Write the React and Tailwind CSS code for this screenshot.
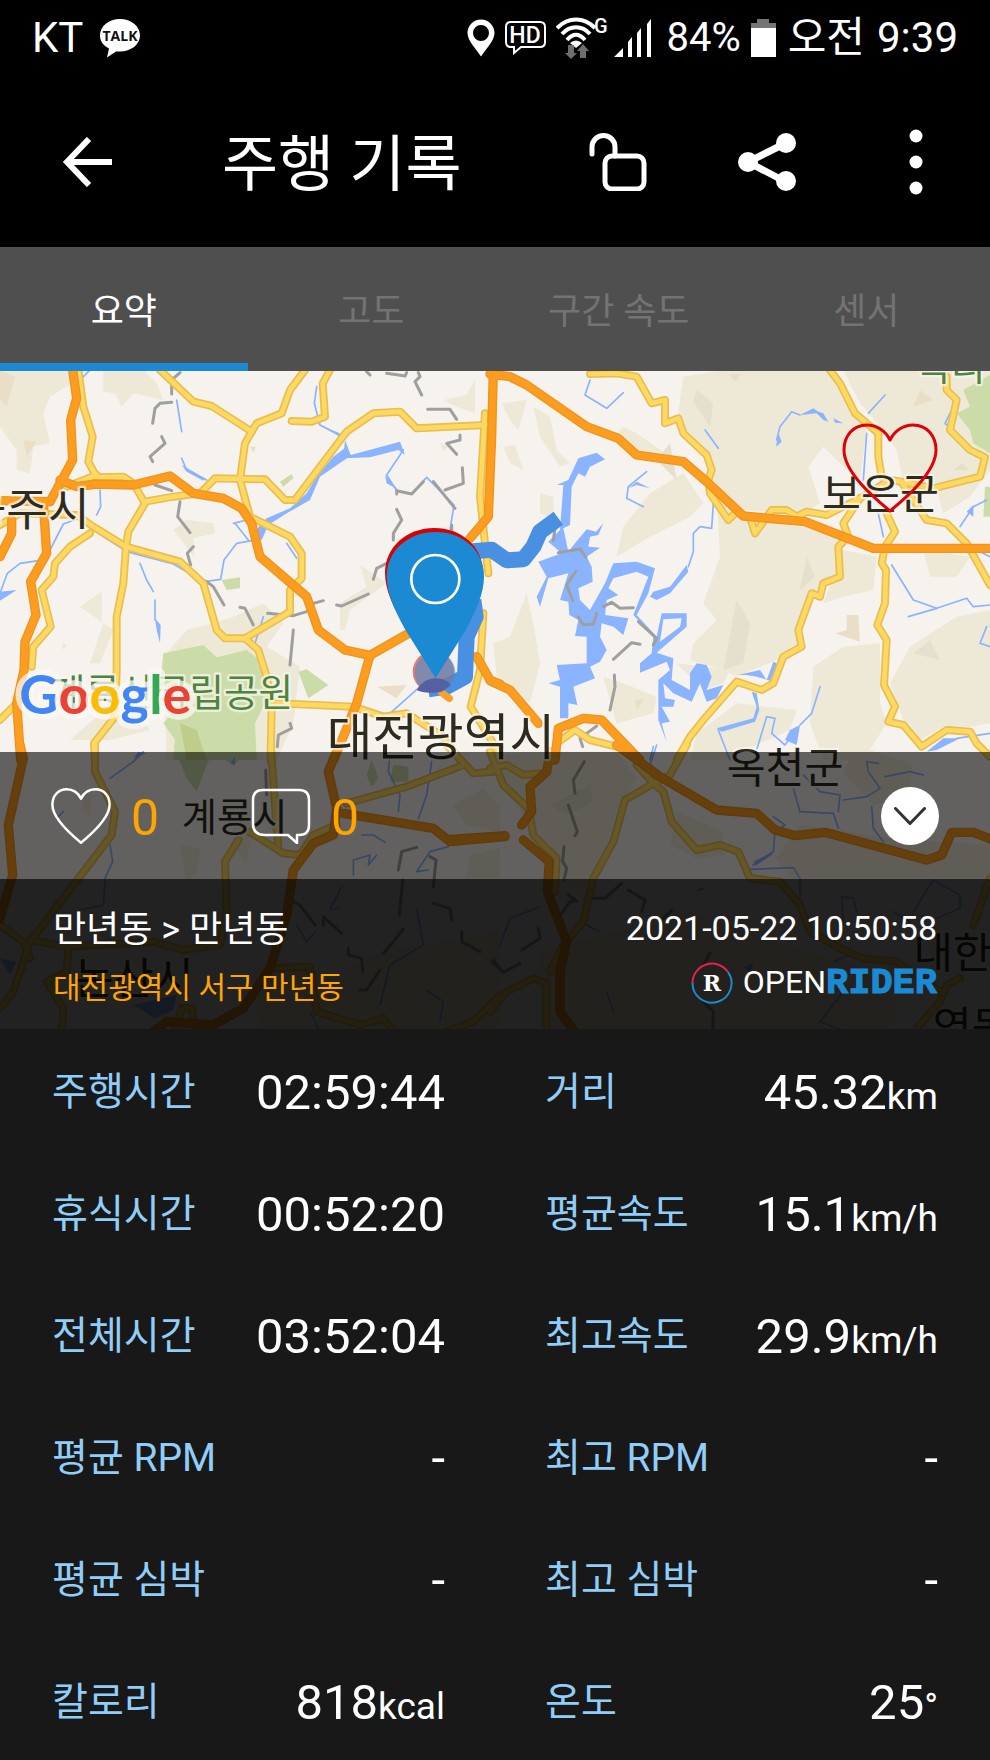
import { useState } from "react";

const TABS = [
  { key: "summary", label: "요약" },
  { key: "altitude", label: "고도" },
  { key: "section", label: "구간 속도" },
  { key: "sensor", label: "센서" },
];

const STATS = [
  { label: "주행시간", value: "02:59:44" },
  { label: "거리", value: "45.32", unit: "km" },
  { label: "휴식시간", value: "00:52:20" },
  { label: "평균속도", value: "15.1", unit: "km/h" },
  { label: "전체시간", value: "03:52:04" },
  { label: "최고속도", value: "29.9", unit: "km/h" },
  { label: "평균 RPM", value: "-" },
  { label: "최고 RPM", value: "-" },
  { label: "평균 심박", value: "-" },
  { label: "최고 심박", value: "-" },
  { label: "칼로리", value: "818", unit: "kcal" },
  { label: "온도", value: "25", unit: "°" },
];

// Map geometry, one entry per tile. Every shape is a list of points local to its tile.
const TILES = [
  {
    key: "nw",
    shift: "translate(0 0)",
    hills: [
      "0,0 205,0 215,40 150,80 130,130 150,220 100,230 90,310 50,300 50,240 0,170",
      "310,0 430,0 470,40 490,90 400,70 365,110 345,70 310,65",
      "520,480 560,450 640,460 645,490 580,505 583,560 550,520",
      "240,710 305,665 305,755",
      "490,860 560,780 640,760 700,740 790,700 850,760 800,830 900,890 880,1060 830,1170 500,1170",
      "1080,585 1160,640 1050,720 1035,780 1020,780 1020,700 1100,650",
      "310,760 340,780 300,880 270,880",
      "1330,90 1400,75 1425,30 1425,130 1370,110",
      "1320,220 1350,225 1330,245",
      "210,1110 290,1040 420,1040 450,1080 330,1110",
      "185,820 200,825 190,840",
    ],
    tan: [
      "0,0 45,20 20,110 0,90",
      "70,210 108,215 80,260",
      "1130,950 1220,945 1190,985",
      "750,230 768,230 760,250",
    ],
    green: [
      "490,850 610,825 650,862 740,840 790,880 800,990 765,1060 770,1170 520,1170 525,1110 490,1060 540,1000 480,950",
      "665,630 720,622 720,655 680,660",
      "895,905 920,898 985,945 925,985",
      "840,335 875,312 880,325 850,350",
    ],
    lakes: [
      "1045,262 960,320 930,390 860,430 805,465 785,510 750,500 800,445 870,415 920,370 950,320 1000,260 1040,230",
      "1035,210 1052,255 1200,215 1215,255 1195,240 1110,262 1030,265",
      "1155,315 1195,360 1160,340",
      "465,745 482,765 480,820 470,780",
      "0,665 50,660 0,692",
      "545,285 615,325 610,332 560,305",
      "950,160 1030,195 1030,205",
    ],
    streams: [
      "950,50 943,100 960,165 1035,205",
      "1210,240 1160,315 1190,362",
      "1235,370 1280,322 1362,405 1350,480",
      "755,512 710,520 672,570 662,628 620,634 560,605 520,582 380,545 280,480",
      "0,670 22,610 60,580 115,572",
      "150,540 190,462 250,440",
      "530,90 545,185",
      "465,690 465,750",
      "300,360 302,410 290,435",
      "705,460 745,510",
      "740,450 700,460",
      "420,580 440,630 460,665",
      "1170,1030 1260,950",
      "270,0 240,30",
      "545,265 560,300 620,330",
      "765,820 790,740",
      "860,520 890,565",
    ],
    borders: [
      "540,8 515,30 515,72",
      "515,97 480,100 465,115 458,160",
      "485,200 495,220 450,260 458,275",
      "465,345 515,362",
      "540,395 533,440 570,488",
      "580,530 562,550 572,585",
      "620,635 640,650 672,705",
      "720,712 735,715 760,765",
      "803,730 880,737 930,722",
      "940,700 970,692",
      "1010,705 1025,708 1105,672",
      "1120,628 1130,595 1160,580",
      "1190,418 1205,450 1180,490 1180,510",
      "1283,118 1350,118 1370,148",
      "1380,195 1380,210 1340,220 1370,253",
      "1387,293 1390,340 1335,360",
      "1190,372 1190,362 1235,372 1270,335",
      "1300,335 1365,415",
      "1100,5 1110,15",
      "1160,10 1215,18 1220,8",
      "1255,8 1260,20 1245,35 1265,75",
      "880,780 870,885",
      "870,1060 875,1075 835,1095 832,1130",
      "1355,465 1355,490",
    ],
    minor: [
      "235,0 250,110 278,200 265,275 290,322 370,320 400,340 435,400 385,485 378,530 370,640 350,740 350,900 345,1040 282,1120 285,1170",
      "200,350 290,315",
      "435,395 520,380 600,370 645,325 795,328 855,390 885,390 1040,185 1120,130 1200,125 1250,175 1460,165",
      "480,0 580,95 635,108 755,185 735,220 720,330 750,440 870,500 905,550 905,625 870,660 870,725 735,805 775,840 800,920 815,1000 812,1170",
      "755,185 770,160 845,130 870,60 915,0",
      "990,0 968,40 975,140 935,155 875,153",
      "0,465 60,430 230,435 280,470 378,530 540,575 610,640 650,780 675,805 735,805",
      "270,490 210,530 165,580 160,620 125,660 152,770 100,830 95,890",
      "0,1050 60,990",
      "830,1000 1060,1010 1150,1040 1220,1030 1330,1100 1380,1170",
      "1455,130 1440,380 1455,520 1465,610",
      "1450,730 1440,900 1412,1010 1480,1120 1500,1170",
    ],
    major: [
      "218,0 230,85 212,150 218,270 150,395",
      "180,330 230,350 290,342 400,345 510,318 580,370 670,385 725,415 755,460 780,560 920,680 955,780 1035,840 1110,856 1235,785",
      "0,392 150,395",
      "130,400 140,550 92,635 108,735 75,815 72,900 50,1000 62,1170",
      "35,450 35,490 0,560",
      "1110,856 1070,1000 1030,1100 1000,1170",
      "1480,0 1475,200 1465,440 1410,505",
      "1430,860 1470,930 1500,942",
    ],
  },
  {
    key: "ne",
    shift: "translate(1470 0)",
    hills: [
      "580,20 700,0 1010,0 1090,130 1130,180 1110,330 1060,290 1000,230 955,290 990,400 940,430 760,420 660,330 640,240 560,160",
      "1060,0 1500,0 1500,300 1440,380 1360,430 1330,330 1240,340 1220,240 1180,180 1110,100",
      "680,380 760,450 940,470 1050,510 1040,610 980,660 920,790 930,830 860,870 740,920 700,900 600,870 610,820 680,750 640,700 690,560",
      "380,560 400,470 480,370 580,310 640,400 600,440 480,500",
      "35,100 110,90 100,130 85,180 60,150",
      "130,110 180,140 200,240 240,280 210,290 150,200",
      "40,230 75,225 100,300 60,280",
      "400,170 440,190 540,260 440,260 370,200",
      "10,820 60,800 110,670 130,760 150,880 120,1000 60,960 20,920",
      "560,880 720,900 700,940 640,960",
      "1060,540 1160,560 1150,660 1060,680 1000,700",
      "1200,940 1260,830 1400,740 1500,720 1500,1060 1440,1070 1360,1070 1290,1110 1240,1050",
      "970,890 1060,830 1170,820 1170,1000 1190,1060 1120,1170 1000,1170 960,1060",
      "1300,540 1440,560 1400,620 1320,620",
      "620,1090 740,1000 920,1020 900,1080 700,1170 600,1170",
      "150,370 190,380 190,450 150,430",
      "340,920 400,940 500,980 490,1030 380,1060",
    ],
    tan: [
      "1070,735 1105,735 1110,815 1035,790 1070,780",
      "1390,300 1415,280 1440,300",
      "715,12 755,12 735,35",
      "435,990 465,985 440,1020",
      "1270,110 1290,60 1330,90",
    ],
    shade: [
      "620,60 670,100 660,170 610,95",
      "540,220 560,330 500,270",
      "950,560 975,620 930,660",
      "1320,810 1350,870 1270,850",
      "740,690 780,760 760,880 700,900",
    ],
    green: [
      "1420,60 1500,15 1500,250 1450,220 1440,180 1400,130 1440,110",
      "1485,350 1500,350 1500,440 1480,440",
    ],
    lakes: [
      "265,265 320,248 345,268 300,290 285,320 265,310 245,350 240,465 220,475 235,545 255,520 290,478 318,485 340,460 325,495 300,500 295,530 330,533 290,560 305,590 308,635 265,655 270,690 300,720 345,640 370,580 440,575 495,595 475,670 440,735 500,800 515,730 590,730 590,770 500,848 550,865 545,930 600,960 600,910 620,880 650,885 665,920 650,960 700,945 680,985 650,995 630,940 605,995 550,970 520,940 525,985 555,990 550,1010 515,1010 540,1055 515,1060 530,1115 505,1050 505,930 540,900 530,875 450,908 450,880 485,850 490,800 430,735 475,620 440,605 370,625 355,655 385,675 350,690 345,735 415,745 400,795 370,770 335,760 330,800 350,840 330,875 300,890 315,925 250,950 262,1005 235,1000 235,1045 210,1045 210,950 175,940 210,930 200,885 290,880 290,800 255,798 265,750 238,735 235,695 210,690 235,610 175,625 150,710 140,680 170,620 145,575 215,550 175,515 210,480 220,345 200,345 235,330",
      "490,665 540,650 590,585 595,605 540,670 500,690 480,680",
      "930,135 970,115 985,125 1000,130 1015,155 1000,150 980,130",
      "1030,145 1060,160 1035,158",
      "865,190 875,215 858,230",
      "440,335 480,355 440,345 415,355",
      "1430,425 1450,405 1450,440",
      "680,1075 790,1045 800,1010 785,965 800,970 808,1020 795,1055 695,1085",
      "745,915 810,900 830,930 850,875 860,880 850,935 800,920 770,915",
      "1310,1145 1360,1105 1410,1105 1340,1140",
      "900,1080 930,1065 920,1125 885,1110",
    ],
    holes: ["520,748 575,745 570,770 510,815"],
    streams: [
      "595,590 610,545 610,490 630,470 665,475 670,400",
      "470,305 415,350 410,385 460,410",
      "685,1080 720,1170",
      "800,1140 815,1090 830,1040 855,1045 845,1090 885,1125 920,1075",
      "990,950 965,1030 930,1065",
      "1205,585 1270,690 1340,715 1430,685 1450,710 1500,705",
      "1255,740 1340,715",
      "860,210 870,170 905,125 930,135",
      "1135,130 1185,75",
      "300,30 285,75 350,115 400,68",
      "645,180 685,235",
      "1165,430 1180,500",
      "1130,190 1120,330",
      "1400,90 1365,160 1430,220",
      "1410,470 1450,410 1490,390",
      "1500,560 1470,545",
      "1490,770 1470,820 1500,830",
      "490,1130 480,1170",
      "1400,1105 1500,1090",
    ],
    borders: [
      "195,475 190,512",
      "205,548 270,537 288,562",
      "258,603 230,645 248,692",
      "265,740 280,765 310,762 320,730",
      "340,710 365,697 390,715 430,713",
      "445,755 500,805 490,825",
      "370,868 425,818 450,823",
      "373,915 375,950 360,1020",
      "320,1068 270,1105 278,1130",
    ],
    minor: [
      "300,12 380,10 440,20 485,100 525,90 525,160 565,145 580,190 650,255 665,300 655,330 660,370 715,450 735,430",
      "780,440 795,490 845,420 890,420 920,440 950,425 1010,435 1110,385 1200,330 1235,335 1330,355 1470,320 1485,262 1440,240 1380,180 1400,90 1370,60 1370,20",
      "1020,0 1050,40 1095,130 1165,190 1165,260 1175,320",
      "1240,345 1310,450 1370,460 1430,520 1500,645",
      "1110,385 1060,460 1075,500 1045,530 1050,620 1000,640 990,680 965,670 925,780 935,830 880,860 850,940 815,960 740,935 640,1050 600,1100 560,1170",
      "1190,430 1215,485 1185,530 1175,580 1188,600 1185,700 1162,765 1190,810 1182,945 1215,1010 1195,1055 1240,1065 1295,1130 1370,1080 1440,1085 1460,1120 1500,1160",
      "200,1120 255,1080 300,1110 400,1135",
    ],
    major: [
      "0,12 60,20 110,45 290,170 385,205 440,255 580,275 650,335 760,438 945,455 1150,535 1510,535",
      "0,932 60,960 145,1060",
      "195,1170 205,1075 280,1045 335,1050 450,1170",
    ],
  },
  {
    key: "sw",
    shift: "translate(0 1125)",
    hills: [
      "250,140 275,150 270,210 245,200",
      "540,300 600,310 590,380 560,420",
      "1360,180 1450,130 1500,180 1500,260 1400,240",
      "1410,330 1500,310 1500,400 1400,400",
      "760,670 850,640 1000,700 1100,640 1250,600 1500,560 1500,860 780,860",
      "700,180 760,200 740,360 700,300",
    ],
    green: [
      "1115,45 1135,100 1115,125 1100,90",
      "1180,60 1225,65 1225,110 1170,110",
      "520,0 770,0 700,60 640,20 620,60 590,140 560,100",
    ],
    lakes: [
      "400,780 530,750 520,795 465,820",
      "400,40 415,20 440,25",
      "690,55 705,35 705,60",
      "0,640 50,650 30,690",
    ],
    streams: [
      "430,20 400,50 330,100",
      "330,300 338,350 315,400 310,480 240,495",
      "1170,30 1165,80 1200,150 1195,200",
      "1295,50 1280,150 1255,222",
      "1085,270 1120,270 1155,292",
      "1060,390 1060,345 1110,330 1105,360 1130,330",
      "1345,305 1290,320 1250,380 1285,375",
      "1025,425 990,495 1015,490",
      "890,540 920,590 945,560",
      "1250,490 1270,600 1170,660 1140,780",
      "1280,735 1330,770 1320,830",
      "930,800 960,860",
      "190,200 170,220",
    ],
    borders: [
      "797,75 800,150",
      "1195,375 1205,320 1250,307",
      "1290,335 1308,345 1300,425",
      "1208,405 1198,510",
      "880,470 900,480 945,540",
      "970,540 970,515 1025,565",
      "1300,475 1350,490 1355,525",
      "1210,552 1180,590 1150,625",
      "1045,610 1045,630 1085,640 1088,680",
      "1140,675 1100,735 1080,735",
      "1385,560 1385,590 1440,620",
      "1480,645 1500,670",
    ],
    minor: [
      "285,0 285,80 345,200 335,270 220,420 90,590 60,680 40,740 0,790",
      "0,540 70,590 90,640",
      "90,585 200,605 460,590 550,615 660,600 680,500 675,350 715,285",
      "812,0 830,250 835,300",
      "750,262 850,325 900,330 940,270 1010,240",
      "1040,175 1220,125 1390,60",
      "1340,0 1420,85 1480,80",
      "205,610 200,680 140,710 190,790 185,870",
      "520,870 545,790 575,790 590,870",
      "830,670 930,665 950,800 1080,840 1150,820 1190,870",
      "1310,870 1420,830 1500,750",
    ],
    major: [
      "60,0 70,40 25,240 38,390 0,520",
      "1010,20 985,80 1010,190 1000,270 940,295 880,375 860,510 810,670 730,790 640,840 500,830 460,860",
      "1030,205 1300,250 1350,290 1515,275",
    ],
  },
  {
    key: "se",
    shift: "translate(1470 1125)",
    hills: [
      "0,40 100,20 380,20 440,100 380,200 340,330 280,440 220,420 180,300 60,160",
      "560,200 700,260 700,330 620,340 540,300",
      "930,240 1200,280 1500,300 1500,400 900,400 860,340",
      "150,620 600,500 950,620 1250,700 1200,860 150,860",
      "1100,0 1270,60 1250,160 1150,180 1060,80",
    ],
    shade: ["180,180 300,120 310,170 230,210"],
    lakes: ["790,350 850,320 845,330 800,360", "610,440 640,425 640,435", "760,665 790,655 780,685"],
    streams: [
      "500,0 470,90",
      "910,130 930,200 1030,205 1045,250",
      "940,90 990,140 1050,150 1045,200",
      "850,215 885,240 855,260 850,320 790,360",
      "780,373 910,368 930,400 930,480",
      "1165,55 1130,50 1135,80 1170,130 1130,155 1060,165",
      "1185,95 1260,80 1300,90",
      "1145,185 1150,250 1180,290",
      "30,600 60,520 150,485",
      "1060,540 1055,455 1090,460 1100,500",
      "1270,500 1330,405 1410,450 1410,490 1340,520",
      "1210,500 1260,530",
      "1060,740 990,830 1050,853",
      "1030,650 1080,630",
      "350,740 370,800",
      "290,540 330,560",
    ],
    borders: [
      "283,50 250,105 255,145",
      "235,180 262,260 255,272",
      "222,305 218,350 230,370 222,405",
      "235,450 260,468 240,470 215,505",
      "310,460 345,460 395,415",
      "415,435 465,465 455,500",
      "145,550 150,580 95,615",
      "5,650 40,682 90,655",
      "545,495 520,520",
      "660,625 640,660",
      "640,770 670,800 668,850",
    ],
    minor: [
      "590,0 540,90 490,115 405,165 370,290 310,400 280,530 220,600 180,680",
      "440,60 490,115 520,140 545,230 620,315 690,300 745,320 780,400 870,410 930,480 960,560 1060,615 1120,640 1220,650 1350,740",
      "1410,700 1370,720 1350,770 1280,850",
      "0,20 40,120 115,190 130,270 200,340 195,440",
      "0,70 50,60 100,90 150,85",
      "0,800 50,740 130,700 170,715 170,860",
      "1500,400 1450,540",
    ],
    major: [
      "380,0 510,95 680,195 800,205 855,255 915,272 1005,262 1310,345 1355,330 1385,262 1450,262 1510,285",
      "180,20 170,80 120,125 125,200 95,240",
      "-120,283 45,272",
      "100,285 178,350 172,440 230,590 210,680 210,800 260,870",
    ],
  },
];

const PLACES = [
  { name: "공주시", x: -106, y: 468, size: 136 },
  { name: "대전광역시", x: 980, y: 1156, size: 149 },
  { name: "보은군", x: 2466, y: 418, size: 127 },
  { name: "계룡시", x: 545, y: 1383, size: 115 },
  { name: "옥천군", x: 2180, y: 1240, size: 127 },
  { name: "논산시", x: 222, y: 1873, size: 130 },
  { name: "대한민국", x: 2742, y: 1794, size: 127 },
  { name: "영동군", x: 2798, y: 2016, size: 127 },
];

const PARKS = [
  { name: "계룡산국립공원", x: 152, y: 1009, size: 113 },
  { name: "속리산", x: 2750, y: 32, size: 112 },
];

const GOOGLE = [
  { letter: "G", color: "#4285f4" },
  { letter: "o", color: "#ea4335" },
  { letter: "o", color: "#fbbc05" },
  { letter: "g", color: "#4285f4" },
  { letter: "l", color: "#34a853" },
  { letter: "e", color: "#ea4335" },
];

// Draws one kind of filled area across all tiles
function AreaLayer({ kind, fill }) {
  return (
    <g fill={fill}>
      {TILES.map((tile) => (
        <g key={tile.key} transform={tile.shift}>
          {(tile[kind] || []).map((points) => (
            <polygon key={points} points={points} />
          ))}
        </g>
      ))}
    </g>
  );
}

// Draws one kind of line across all tiles
function LineLayer({ kind, stroke, width }) {
  return (
    <g
      fill="none"
      stroke={stroke}
      strokeWidth={width}
      strokeLinecap="round"
      strokeLinejoin="round"
    >
      {TILES.map((tile) => (
        <g key={tile.key} transform={tile.shift}>
          {(tile[kind] || []).map((points) => (
            <polyline key={points} points={points} />
          ))}
        </g>
      ))}
    </g>
  );
}

function RideMap() {
  return (
    <svg
      viewBox="0 3 2970 1977"
      preserveAspectRatio="xMidYMin slice"
      className="absolute inset-0 h-full w-full bg-[#f6f2ee]"
      role="img"
      aria-label="주행 경로 지도"
    >
      <AreaLayer kind="hills" fill="#ede9d6" />
      <AreaLayer kind="shade" fill="#e4e0cd" />
      <AreaLayer kind="tan" fill="#eadfc6" />
      <AreaLayer kind="green" fill="#cbdca8" />
      <polygon points="540,1060 590,1080 620,1170 560,1170" fill="#c0cd88" />
      <AreaLayer kind="lakes" fill="#8ab4ff" />
      <AreaLayer kind="holes" fill="#f6f2ee" />
      <LineLayer kind="streams" stroke="#8ab4ff" width={5} />
      <LineLayer kind="borders" stroke="#9f9f9f" width={9} />
      <LineLayer kind="minor" stroke="#e9bd50" width={24} />
      <LineLayer kind="minor" stroke="#fdd962" width={14} />
      <LineLayer kind="major" stroke="#ee9420" width={28} />
      <LineLayer kind="major" stroke="#fc9d20" width={20} />

      <g
        fill="#2c2b20"
        stroke="#f8f4ee"
        strokeOpacity="0.75"
        strokeWidth="14"
        strokeLinejoin="round"
        paintOrder="stroke"
      >
        {PLACES.map((place) => (
          <text key={place.name} x={place.x} y={place.y} fontSize={place.size}>
            {place.name}
          </text>
        ))}
        {PARKS.map((park) => (
          <text key={park.name} x={park.x} y={park.y} fontSize={park.size} fill="#4c8440">
            {park.name}
          </text>
        ))}
      </g>

      {/* Ridden route */}
      <g fill="none" stroke="#4a90e2" strokeWidth="48" strokeLinejoin="round">
        <polyline points="1400,545 1475,539 1520,571 1570,568 1600,530 1620,485 1675,445" />
        <polyline points="1420,690 1427,740 1400,800 1395,920 1340,950 1285,958" />
      </g>
      <path d="M1325 968 L1348 985" stroke="#f5a030" strokeWidth="22" strokeLinecap="round" />

      {/* Start and finish markers */}
      <circle cx="1300" cy="905" r="62" fill="#e23b3b" fillOpacity="0.65" />
      <circle cx="1305" cy="908" r="61" fill="#4a90c8" fillOpacity="0.65" />
      <path d="M1250 960 Q1270 925 1307 925 Q1340 925 1352 945 Q1330 968 1300 968 Q1270 970 1250 960" fill="#5560a2" />
      <path
        d="M1303 914 L1212 768 C1180 710 1155 660 1155 608 C1155 530 1222 474 1303 474 C1384 474 1449 530 1449 608 C1449 660 1424 710 1394 768 Z"
        fill="#d90000"
      />
      <path
        d="M1307 925 L1216 779 C1184 721 1160 671 1160 619 C1160 541 1226 486 1307 486 C1388 486 1452 541 1452 619 C1452 671 1428 721 1398 779 Z"
        fill="#1b8ad3"
      />
      <circle cx="1306" cy="627" r="72" fill="none" stroke="#fff" strokeWidth="8" />

      <text
        x="58"
        y="1033"
        fontSize="162"
        fontFamily="Lato"
        fontWeight="700"
        stroke="#fbf7f2"
        strokeOpacity="0.75"
        strokeWidth="34"
        strokeLinejoin="round"
        paintOrder="stroke"
      >
        {GOOGLE.map((item, i) => (
          <tspan key={i} fill={item.color}>
            {item.letter}
          </tspan>
        ))}
      </text>
    </svg>
  );
}

function HeartIcon({ className, strokeWidth }) {
  return (
    <svg viewBox="0 0 96 90" className={className} fill="none" stroke="currentColor" strokeWidth={strokeWidth} strokeLinejoin="round">
      <path d="M48 17 C43 7 34 2 25 2 C11 2 2 13 2 27 C2 49 31 74 48 88 C65 74 94 49 94 27 C94 13 85 2 71 2 C62 2 53 7 48 17 Z" />
    </svg>
  );
}

function StatusBar() {
  return (
    <div className="flex h-[76px] items-center justify-between pr-8 pl-8">
      <div className="flex items-center gap-4">
        <span className="text-[42px] leading-none">KT</span>
        <svg viewBox="0 0 42 40" className="h-10 w-[42px]">
          <path d="M21 1 C32 1 41 8 41 17.500 C41 26.500 32 33.500 21 33.500 L17 33.500 L8 39.500 L10 30.500 C4 27.500 1 23 1 17.500 C1 8 10 1 21 1 Z" fill="#fff" />
          <text x="21" y="23" textAnchor="middle" fontSize="14" fontWeight="700" fill="#111" fontFamily="Open Sans">
            TALK
          </text>
        </svg>
      </div>

      <div className="flex items-center">
        <svg viewBox="0 0 28 38" className="mr-2.5 h-[38px] w-7">
          <path
            d="M14 0.500 C21.500 0.500 27.500 6.500 27.500 14 C27.500 22 18 31 14 37.500 C10 31 0.500 22 0.500 14 C0.500 6.500 6.500 0.500 14 0.500 Z M14 6 A8 8 0 1 0 14 22 A8 8 0 1 0 14 6 Z"
            fill="#fff"
            fillRule="evenodd"
          />
        </svg>
        <svg viewBox="0 0 41 34" className="mr-2.5 h-[34px] w-[41px]" fill="none">
          <path d="M6 1 H35 Q40 1 40 6 V21 Q40 26 35 26 H16 L9 32 V26 H6 Q1 26 1 21 V6 Q1 1 6 1 Z" stroke="#fff" strokeWidth="2" />
          <text x="20" y="22" textAnchor="middle" fontSize="23" fontWeight="500" fill="#fff">
            HD
          </text>
        </svg>
        <svg viewBox="0 0 54 44" className="mr-1 h-11 w-[54px]" fill="none" stroke="#fff" strokeWidth="4">
          <path d="M1 12 C12 0.500 28 0.500 39 12" />
          <path d="M6 18 C14 9 26 9 34 18" />
          <path d="M11 24 C17 17 23 17 29 24" />
          <path d="M20 32 L14 27 Q20 22 26 27 Z" fill="#fff" stroke="none" />
          <path d="M9 37 L15 43 L21 37 H18 V29 H12 V37 Z M21 35 L27 28 L33 35 H30 V42 H24 V35 Z" fill="#6e6e6e" stroke="none" />
          <text x="38" y="17" fontSize="20" fontWeight="500" fill="#fff" stroke="none">
            G
          </text>
        </svg>
        <svg viewBox="0 0 38 38" className="mr-3.5 h-[38px] w-[38px]" fill="#fff">
          <path d="M0 38 L9 29 V38 Z M14 23 L18 18 V38 H14 Z M23 14 L27 9 V38 H23 Z M33 5 L37 0 V38 H33 Z" />
        </svg>
        <span className="mr-2.5 text-[40px] leading-none">84%</span>
        <svg viewBox="0 0 25 38" className="mr-3 h-[38px] w-[25px]">
          <path d="M6 0 H18 V4 H25 V10 H0 V4 H6 Z" fill="#757575" />
          <rect y="9" width="25" height="29" fill="#fff" />
        </svg>
        <span className="text-[42px] leading-none">오전</span>
        <span className="ml-3 text-[42px] leading-none">9:39</span>
      </div>
    </div>
  );
}

function AppBar() {
  return (
    <div className="flex h-[171px] items-center justify-between pr-[60px] pl-[62px]">
      <div className="flex items-center">
        <button type="button" aria-label="뒤로" className="mr-[110px]">
          <svg viewBox="0 0 50 50" className="h-[50px] w-[50px]" fill="none" stroke="#fff" strokeWidth="6">
            <path d="M27 2 L5 25 L27 48 M5 25 H50" />
          </svg>
        </button>
        <h1 className="pt-2 text-[61px] leading-none">주행 기록</h1>
      </div>
      <div className="flex items-center">
        <button type="button" aria-label="잠금 해제" className="mr-[91px]">
          <svg viewBox="0 0 58 58" className="h-[58px] w-[58px]" fill="none" stroke="#fff" strokeWidth="5" strokeLinecap="round">
            <path d="M3 21 V14 A11.500 11.500 0 0 1 26 14 V23" />
            <rect x="16" y="23" width="39" height="33" rx="7" />
          </svg>
        </button>
        <button type="button" aria-label="공유" className="mr-[106px]">
          <svg viewBox="0 0 58 58" className="h-[58px] w-[58px]" fill="#fff">
            <path d="M48 10 L10 29 L48 49" fill="none" stroke="#fff" strokeWidth="7" />
            <circle cx="10" cy="29" r="10" />
            <circle cx="48" cy="10" r="10" />
            <circle cx="48" cy="48" r="10" />
          </svg>
        </button>
        <button type="button" aria-label="더보기">
          <svg viewBox="0 0 28 66" className="h-[66px] w-7" fill="#fff">
            <circle cx="14" cy="7" r="6.500" />
            <circle cx="14" cy="33" r="6.500" />
            <circle cx="14" cy="59" r="6.500" />
          </svg>
        </button>
      </div>
    </div>
  );
}

function OpenRiderLogo() {
  return (
    <div className="flex h-[42px] items-center">
      <svg viewBox="0 0 42 42" className="mr-2.5 h-[42px] w-[42px]" fill="none" strokeWidth="2">
        <path d="M1.500 21 A19.500 19.500 0 0 1 37 10" stroke="#e0234e" />
        <path d="M37 10 A19.500 19.500 0 1 1 1.500 21" stroke="#1b8ad3" />
        <text x="21" y="29" textAnchor="middle" fontSize="22" fontWeight="700" fill="#fff" fontFamily="DejaVu Serif">
          R
        </text>
      </svg>
      <span className="flex items-baseline leading-none">
        <span className="text-[32px]">OPEN</span>
        <span className="font-['Liberation_Mono',monospace] text-[37px] font-bold text-[#1b8ad3] [-webkit-text-stroke:1px]">
          RIDER
        </span>
      </span>
    </div>
  );
}

export default function App() {
  const [activeTab, setActiveTab] = useState("summary");

  return (
    <div className="min-h-screen bg-[#181818] font-['Roboto','Noto_Sans_CJK_KR',sans-serif] text-white">
      <header className="bg-black">
        <StatusBar />
        <AppBar />
      </header>

      {/* Tabs */}
      <nav className="grid h-[124px] grid-cols-4 bg-[#4f4f4f]" role="tablist">
        {TABS.map((tab) => (
          <button
            key={tab.key}
            type="button"
            role="tab"
            aria-selected={activeTab === tab.key}
            onClick={() => setActiveTab(tab.key)}
            className={`border-y-8 border-t-transparent pt-1.5 text-[36px] leading-none ${
              activeTab === tab.key
                ? "border-b-[#1b8ad3] text-white"
                : "border-b-transparent text-[#737373]"
            }`}
          >
            {tab.label}
          </button>
        ))}
      </nav>

      {/* Map with the panels that sit on top of it */}
      <section className="relative overflow-hidden">
        <RideMap />
        <div className="relative flex h-[381px] items-start justify-end px-[52px] pt-[52px]">
          <button type="button" aria-label="즐겨찾기" className="text-[#e00008]">
            <HeartIcon className="h-[90px] w-24" strokeWidth="3" />
          </button>
        </div>

        <div className="relative flex h-[127px] items-center justify-between bg-black/60 pr-[51px] pl-[51px]">
          <div className="flex items-center">
            <button type="button" aria-label="좋아요" className="flex items-center gap-5">
              <HeartIcon className="h-14 w-[60px]" strokeWidth="4" />
              <span className="pt-1 text-[50px] leading-none text-[#ffa500]">0</span>
            </button>
            <button type="button" aria-label="댓글" className="ml-[92px] flex items-center gap-5">
              <svg viewBox="0 0 60 56" className="h-14 w-[60px]" fill="none" stroke="#fff" strokeWidth="2.500" strokeLinejoin="round">
                <path d="M12 2 H48 Q58 2 58 12 V37 Q58 47 48 47 H46 V55 L37 47 H14 Q2 47 2 36 V12 Q2 2 12 2 Z" />
              </svg>
              <span className="pt-1 text-[50px] leading-none text-[#ffa500]">0</span>
            </button>
          </div>
          <button
            type="button"
            aria-label="접기"
            className="flex h-[58px] w-[58px] items-center justify-center rounded-full bg-white"
          >
            <svg viewBox="0 0 32 18" className="h-[18px] w-8" fill="none" stroke="#333" strokeWidth="3" strokeLinecap="round">
              <path d="M1.500 1.500 L16 16.500 L30.500 1.500" />
            </svg>
          </button>
        </div>

        <div className="relative flex h-[150px] justify-between bg-black/86 px-[53px] pt-[29px]">
          <div>
            <p className="pt-0.5 text-[36px] leading-10">만년동 &gt; 만년동</p>
            <p className="mt-[18px] text-[30px] leading-10 text-[#ffa500]">대전광역시 서구 만년동</p>
          </div>
          <div className="flex flex-col items-end">
            <p className="text-[34px] leading-10">2021-05-22 10:50:58</p>
            <div className="mt-3.5">
              <OpenRiderLogo />
            </div>
          </div>
        </div>
      </section>

      {/* Ride statistics */}
      <dl className="grid grid-cols-2 gap-x-[100px] px-[52px]">
        {STATS.map((stat) => (
          <div key={stat.label} className="flex h-[122px] items-center justify-between pt-1">
            <dt className="text-[39px] leading-none text-[#90cef9]">{stat.label}</dt>
            <dd className="text-[49px] leading-none">
              {stat.value}
              {stat.unit && <span className="text-[37px]">{stat.unit}</span>}
            </dd>
          </div>
        ))}
      </dl>
    </div>
  );
}
